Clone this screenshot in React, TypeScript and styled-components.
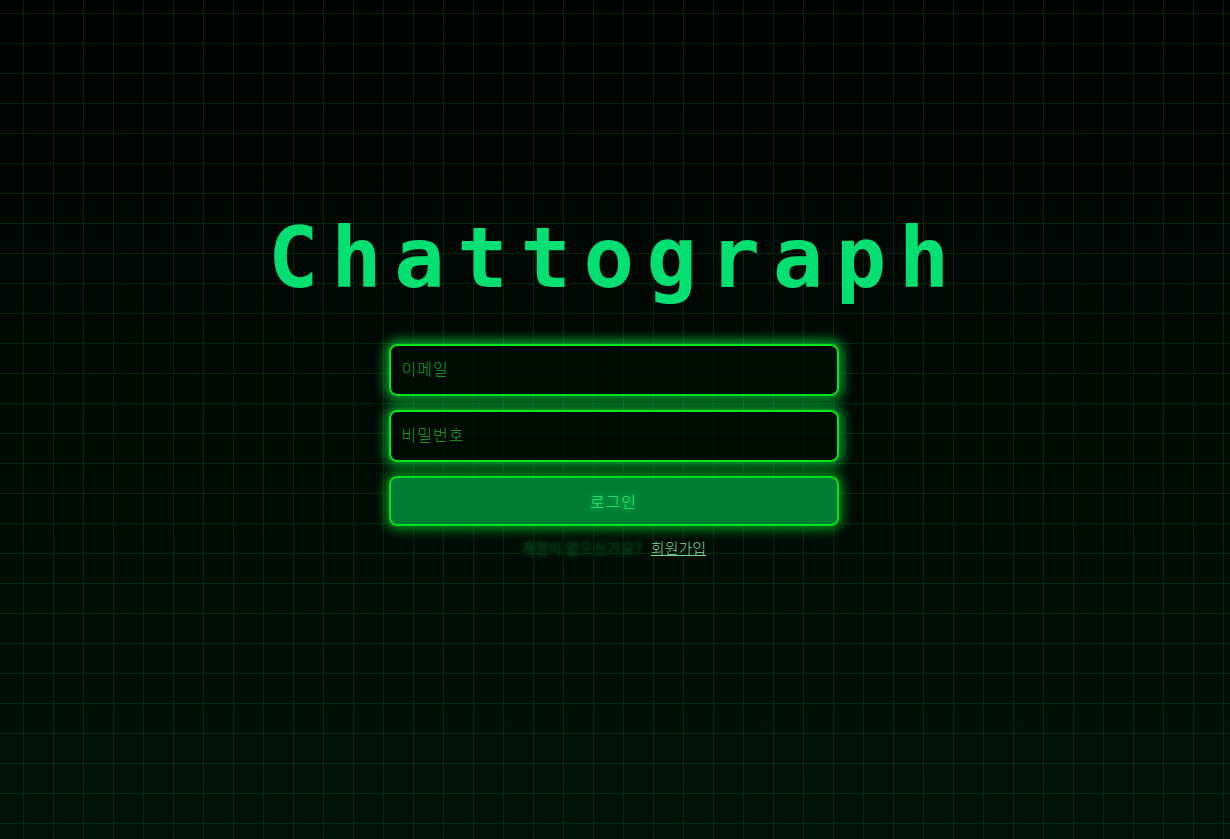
import React from "react";
import styled, { createGlobalStyle } from "styled-components";

const Global = createGlobalStyle`
  html, body { margin: 0; padding: 0; height: 100%; }
  body {
    background: #000;
    font-family: "Noto Sans CJK KR", "Noto Sans", sans-serif;
  }
  #root { height: 100%; }
`;

const Page = styled.div`
  min-height: 839px;
  height: 100vh;
  box-sizing: border-box;
  background-color: #000;
  background-image:
    linear-gradient(rgba(10, 90, 30, 0.35) 1px, transparent 1px),
    linear-gradient(90deg, rgba(10, 90, 30, 0.35) 1px, transparent 1px),
    linear-gradient(180deg, #010302 0%, #010a05 50%, #011209 100%);
  background-size: 30px 30px, 30px 30px, 100% 100%;
  background-position: 23px 13px, 23px 13px, 0 0;
  display: flex;
  flex-direction: column;
  align-items: center;
  padding-top: 216px;
`;

const Title = styled.h1`
  margin: 0 0 44px 0;
  font-family: "DejaVu Sans Mono", monospace;
  font-weight: 700;
  font-size: 84px;
  line-height: 84px;
  letter-spacing: 12.5px;
  color: #04df72;
`;

const Form = styled.form`
  width: 450px;
  margin-right: 3px;
  display: flex;
  flex-direction: column;
  gap: 14px;
`;

const Input = styled.input`
  box-sizing: border-box;
  height: 52px;
  width: 100%;
  padding: 0 11px 4px;
  border: 2px solid #00e81e;
  border-radius: 8px;
  background: rgba(0, 12, 5, 0.75);
  color: #2fd050;
  font-family: "Noto Sans CJK KR", sans-serif;
  font-weight: 300;
  font-size: 16px;
  letter-spacing: 1px;
  outline: none;
  box-shadow: 0 0 12px 4px rgba(0, 240, 70, 0.65);
  &::placeholder {
    color: #1f9e2e;
  }
`;

const Button = styled.button`
  box-sizing: border-box;
  height: 50px;
  width: 100%;
  padding-bottom: 2px;
  border: 2px solid #00e01c;
  border-radius: 8px;
  background: rgba(0, 135, 58, 0.92);
  color: #2ae872;
  font-family: "Noto Sans CJK KR", sans-serif;
  font-weight: 300;
  font-size: 16px;
  letter-spacing: 1px;
  text-shadow: 0 0 6px rgba(40, 255, 110, 0.9);
  box-shadow: 0 0 12px 3px rgba(0, 230, 40, 0.65);
  cursor: pointer;
`;

const Footer = styled.p`
  margin: -2px 0 0 0;
  text-align: center;
  font-family: "Noto Sans CJK KR", sans-serif;
  font-size: 15px;
  line-height: 20px;
`;

const Muted = styled.span`
  color: rgba(10, 70, 22, 0.35);
  text-shadow: 0 0 5px #0a6620;
  margin-right: 9px;
`;

const Link = styled.a`
  color: #7ad896;
  font-weight: 300;
  text-decoration: underline;
  cursor: pointer;
`;

export default function App() {
  return (
    <>
      <Global />
      <Page>
        <Title>Chattograph</Title>
        <Form onSubmit={(e) => e.preventDefault()}>
          <Input type="email" placeholder="이메일" />
          <Input type="password" placeholder="비밀번호" />
          <Button type="submit">로그인</Button>
          <Footer>
            <Muted>계정이 없으신가요?</Muted>
            <Link>회원가입</Link>
          </Footer>
        </Form>
      </Page>
    </>
  );
}
